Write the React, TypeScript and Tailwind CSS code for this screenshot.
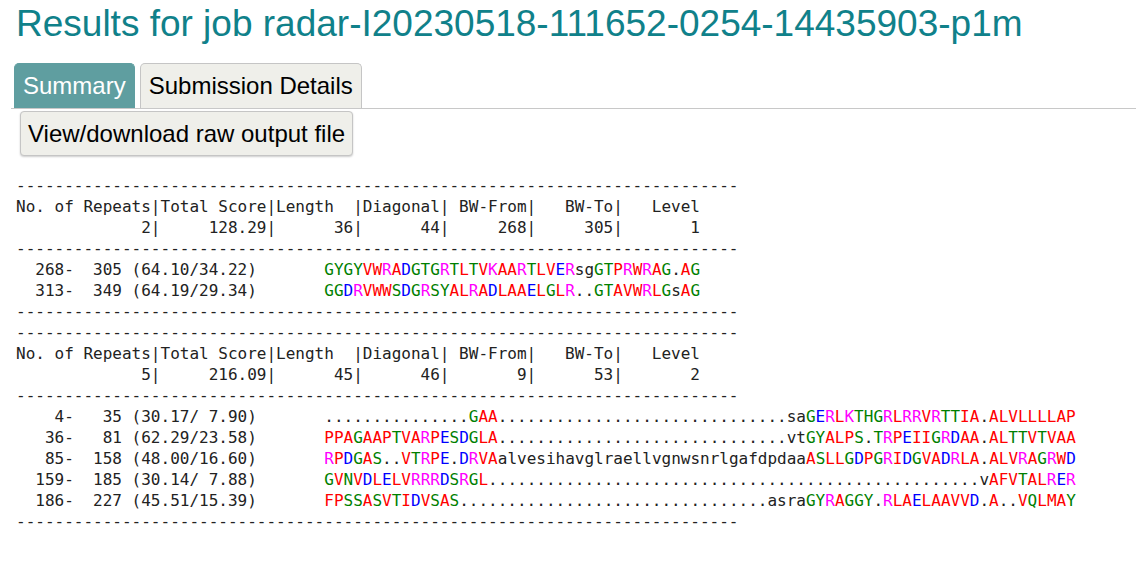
const DASHES = "-".repeat(75);
const HEADER = "No. of Repeats|Total Score|Length  |Diagonal| BW-From|   BW-To|   Level";

interface Block {
  values: string;
  rows: { pos: string; seq: string }[];
}

const blocks: Block[] = [
  {
    values: "             2|     128.29|      36|      44|     268|     305|       1",
    rows: [
      { pos: "  268-  305 (64.10/34.22)", seq: "GYGYVWRADGTGRTLTVKAARTLVERsgGTPRWRAG.AG" },
      { pos: "  313-  349 (64.19/29.34)", seq: "GGDRVWWSDGRSYALRADLAAELGLR..GTAVWRLGsAG" },
    ],
  },
  {
    values: "             5|     216.09|      45|      46|       9|      53|       2",
    rows: [
      { pos: "    4-   35 (30.17/ 7.90)", seq: ".".repeat(15) + "GAA" + ".".repeat(30) + "saGERLKTHGRLRRVRTTIA.ALVLLLLAP" },
      { pos: "   36-   81 (62.29/23.58)", seq: "PPAGAAPTVARPESDGLA" + ".".repeat(30) + "vtGYALPS.TRPEIIGRDAA.ALTTVTVAA" },
      { pos: "   85-  158 (48.00/16.60)", seq: "RPDGAS..VTRPE.DRVAalvesihavglraellvgnwsnrlgafdpdaaASLLGDPGRIDGVADRLA.ALVRAGRWD" },
      { pos: "  159-  185 (30.14/ 7.88)", seq: "GVNVDLELVRRRDSRGL" + ".".repeat(51) + "vAFVTALRER" },
      { pos: "  186-  227 (45.51/15.39)", seq: "FPSSASVTIDVSAS" + ".".repeat(32) + "asraGYRAGGY.RLAELAAVVD.A..VQLMAY" },
    ],
  },
];

// clustal style colours
function residueClass(c: string) {
  if ("AVFPMILW".includes(c)) return "text-[#ff0000]";
  if ("DE".includes(c)) return "text-[#0000ff]";
  if ("RK".includes(c)) return "text-[#ff00ff]";
  if ("STYHCNGQ".includes(c)) return "text-[#008000]";
  return "";
}

function Seq({ seq }: { seq: string }) {
  // group runs of same colour
  const runs: { cls: string; text: string }[] = [];
  for (const c of seq) {
    const cls = residueClass(c);
    const last = runs[runs.length - 1];
    if (last && last.cls === cls) last.text += c;
    else runs.push({ cls, text: c });
  }
  return (
    <>
      {runs.map((r, i) => (
        <span key={i} className={r.cls}>
          {r.text}
        </span>
      ))}
    </>
  );
}

export default function App() {
  return (
    <div className="min-h-screen bg-white font-['Liberation_Sans',Arial,sans-serif] text-black">
      <h1 className="pl-4 pt-[3px] text-[37px] leading-[42px] font-normal text-[#10818a] whitespace-nowrap">
        Results for job radar-I20230518-111652-0254-14435903-p1m
      </h1>

      <div className="ml-[11px] mt-[18px] flex items-end gap-[5px] border-b border-[#c8c8c8] pl-[3px]">
        <div className="flex h-[45px] items-center rounded-t-[5px] border border-b-0 border-[#5f9ea0] bg-[#5f9ea0] px-2 text-[24px] leading-[28px] text-white">
          Summary
        </div>
        <div className="flex h-[45px] items-center rounded-t-[5px] border border-b-0 border-[#c5c5c5] bg-[#efefea] px-2 text-[24px] leading-[28px] text-black">
          Submission Details
        </div>
      </div>

      <button className="ml-[20px] mt-[2px] flex h-[45px] items-center rounded-[4px] border border-[#c5c5c5] bg-[#efefea] px-[7px] text-[24px] leading-[28px] text-black shadow-[0_1px_2px_rgba(0,0,0,0.2)]">
        View/download raw output file
      </button>

      <pre className="ml-4 mt-[19px] font-['DejaVu_Sans_Mono',monospace] text-[16px] leading-[21px] text-[#222]">
        {blocks.map((b, bi) => (
          <span key={bi}>
            {DASHES + "\n"}
            {HEADER + "\n"}
            {b.values + "\n"}
            {DASHES + "\n"}
            {b.rows.map((r, ri) => (
              <span key={ri}>
                {r.pos + "       "}
                <Seq seq={r.seq} />
                {"\n"}
              </span>
            ))}
            {DASHES + "\n"}
          </span>
        ))}
      </pre>
    </div>
  );
}
